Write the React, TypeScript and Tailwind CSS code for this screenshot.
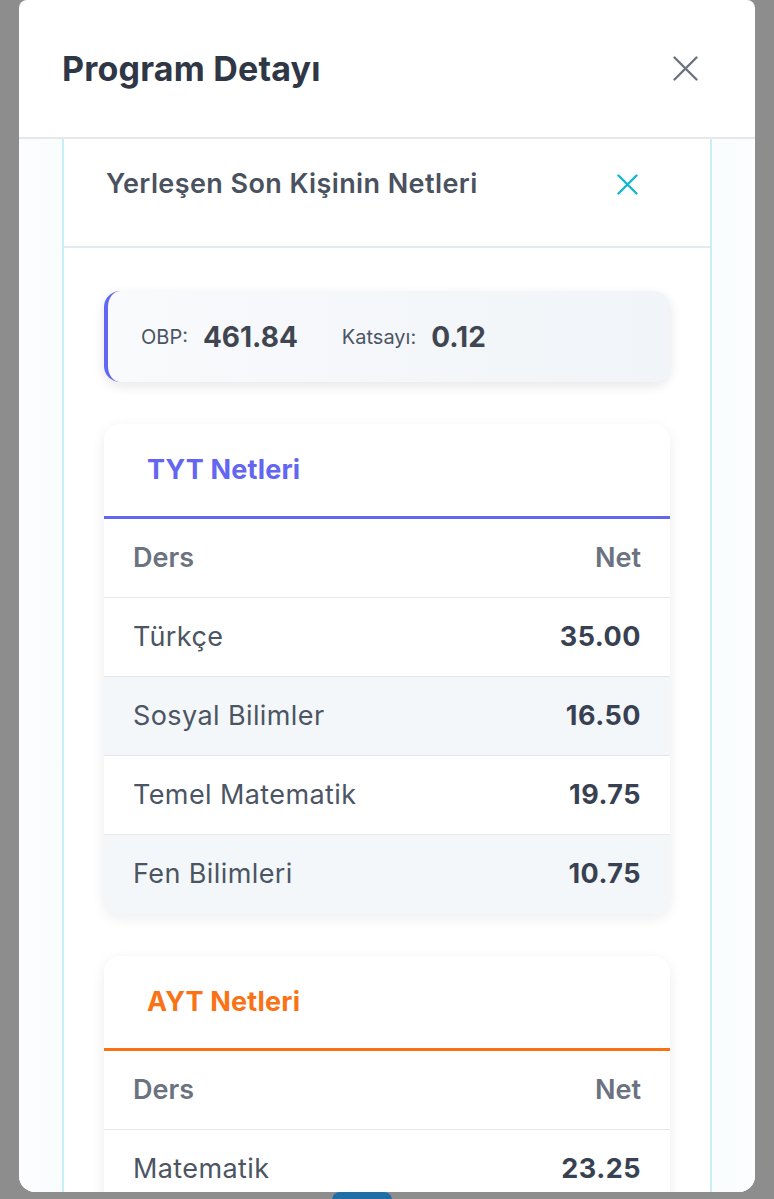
import React from "react";

type Row = { name: string; net: string };

const tytRows: Row[] = [
  { name: "Türkçe", net: "35.00" },
  { name: "Sosyal Bilimler", net: "16.50" },
  { name: "Temel Matematik", net: "19.75" },
  { name: "Fen Bilimleri", net: "10.75" },
];

const aytRows: Row[] = [{ name: "Matematik", net: "23.25" }];

const CloseIcon: React.FC<{ size: number; className?: string }> = ({ size, className }) => (
  <svg width={size} height={size} viewBox={`0 0 ${size} ${size}`} className={className} fill="none">
    <path
      d={`M1.5 1.5 L${size - 1.5} ${size - 1.5} M${size - 1.5} 1.5 L1.5 ${size - 1.5}`}
      stroke="currentColor"
      strokeWidth="2.4"
      strokeLinecap="round"
    />
  </svg>
);

const NetCard: React.FC<{ title: string; accent: "indigo" | "orange"; rows: Row[] }> = ({ title, accent, rows }) => {
  const isTyt = accent === "indigo";
  return (
    <div className="bg-white rounded-2xl shadow-[0_4px_14px_rgba(15,23,42,0.08)] overflow-hidden shrink-0">
      <div
        className={
          isTyt
            ? "h-[95px] flex items-center pl-[43px] border-b-[3px] border-[#6366f1]"
            : "h-[95px] flex items-center pl-[43px] border-b-[3px] border-[#f97316]"
        }
      >
        <h3
          className={
            isTyt
              ? "text-[27px] font-bold tracking-[0.2px] text-[#6366f1]"
              : "text-[27px] font-bold tracking-[0.2px] text-[#f97316]"
          }
        >
          {title}
        </h3>
      </div>
      <div className="h-[79px] flex items-center justify-between px-[29px] border-b border-[#e5e7eb]">
        <span className="text-[27px] font-semibold text-[#6b7280]">Ders</span>
        <span className="text-[27px] font-semibold text-[#6b7280]">Net</span>
      </div>
      {rows.map((r, i) => (
        <div
          key={r.name}
          className={
            (i % 2 === 1 ? "bg-[#f4f7fa] " : "bg-white ") +
            (i === rows.length - 1 ? "" : "border-b border-[#e5e7eb] ") +
            "h-[79px] flex items-center justify-between px-[29px]"
          }
        >
          <span className="text-[27px] tracking-[0.4px] text-[#4b5563]">{r.name}</span>
          <span className="text-[27px] font-bold tracking-[0.5px] text-[#374151]">{r.net}</span>
        </div>
      ))}
    </div>
  );
};

export default function App() {
  return (
    <div
      className="w-[774px] h-[1199px] bg-[#8d8d8d] flex flex-col overflow-hidden"
      style={{ fontFamily: "Inter, 'Noto Sans', sans-serif" }}
    >
      <div className="mx-[19px] h-[1192px] shrink-0 bg-white rounded-t-lg rounded-b-2xl flex flex-col overflow-hidden">
        {/* modal header */}
        <div className="h-[139px] shrink-0 flex items-center justify-between pl-[43px] pr-[57px] border-b-2 border-[#e5e7eb]">
          <h2 className="text-[34px] font-bold text-[#2f3747] tracking-[0.2px]">Program Detayı</h2>
          <button className="text-[#6b7280]">
            <CloseIcon size={25} />
          </button>
        </div>

        {/* modal body */}
        <div className="flex-1 min-h-0 px-[43px] bg-gradient-to-r from-[#fbfdfe] via-[#eef8fc] to-[#fbfdfe]">
          <div className="h-full bg-white border-x-2 border-[#c9eef5] flex flex-col overflow-hidden">
            <div className="h-[109px] shrink-0 flex items-center justify-between pl-[42px] pr-[72px] pb-[16px] border-b-2 border-[#e3eaf2]">
              <h3 className="text-[27px] font-semibold tracking-[0.4px] text-[#4a5260]">Yerleşen Son Kişinin Netleri</h3>
              <button className="text-[#13b5cf]">
                <CloseIcon size={21} />
              </button>
            </div>

            <div className="flex flex-col gap-[42px] px-[40px] pt-[43px]">
              {/* OBP summary */}
              <div className="h-[91px] shrink-0 rounded-2xl border-l-4 border-[#6366f1] bg-gradient-to-r from-[#f8fafc] to-[#f1f4f8] shadow-[0_4px_12px_rgba(15,23,42,0.10)] flex items-center pl-[33px]">
                <span className="text-[20px] text-[#4b5563]">OBP:</span>
                <span className="ml-[15px] text-[28px] font-bold text-[#3f4652]">461.84</span>
                <span className="ml-[44px] text-[20px] text-[#4b5563]">Katsayı:</span>
                <span className="ml-[15px] text-[28px] font-bold text-[#3f4652]">0.12</span>
              </div>

              <NetCard title="TYT Netleri" accent="indigo" rows={tytRows} />
              <NetCard title="AYT Netleri" accent="orange" rows={aytRows} />
            </div>
          </div>
        </div>
      </div>

      {/* page behind the modal */}
      <div className="flex-1 flex items-start pl-[332px]">
        <div className="w-[60px] h-[8px] rounded-t-full bg-[#1f6fa6]" />
      </div>
    </div>
  );
}
